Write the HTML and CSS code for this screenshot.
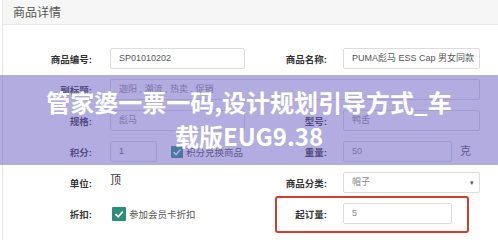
FILE: index.html
```html
<!DOCTYPE html>
<html lang="zh">
<head>
    <meta charset="UTF-8">
    <meta name="viewport" content="width=device-width, initial-scale=1.0">
    <title>商品详情</title>
    <link rel="stylesheet" href="styles.css">
</head>
<body>
    <div class="page">
        <div class="panel">
            <div class="panel-head">商品详情</div>
            <div class="panel-body">
                <div class="row">
                    <span class="label">商品编号:</span>
                    <div class="input">SP01010202</div>
                    <span class="label label-r">商品名称:</span>
                    <div class="input">PUMA彪马 ESS Cap 男女同款</div>
                </div>
                <div class="row">
                    <span class="label">副标题:</span>
                    <div class="input input-wide muted">迦阳 , 潮流 , 热卖 , 促销</div>
                </div>
                <div class="row">
                    <span class="label">规格:</span>
                    <div class="input muted">彪马</div>
                    <span class="label label-r">型号:</span>
                    <div class="input muted">鸭舌</div>
                </div>
                <div class="row">
                    <span class="label">积分:</span>
                    <div class="inline">
                        <div class="input input-xs">1</div>
                        <span class="check"><svg viewBox="0 0 14 14" width="12" height="12"><path d="M3 7.2 L6 10 L11 4.2" fill="none" stroke="#fff" stroke-width="1.8"/></svg></span>
                        <span class="check-text">积分兑换商品</span>
                    </div>
                    <span class="label label-r">重量:</span>
                    <div class="inline">
                        <div class="input input-s muted">50</div>
                        <span class="unit">克</span>
                    </div>
                </div>
                <div class="row">
                    <span class="label">单位:</span>
                    <span class="plain">顶</span>
                    <span class="label label-r">商品分类:</span>
                    <div class="input select muted">帽子<span class="caret">▾</span></div>
                </div>
                <div class="row row-mark">
                    <span class="label">折扣:</span>
                    <div class="inline">
                        <span class="check check-lg"><svg viewBox="0 0 14 14" width="14" height="14"><path d="M3.5 7.2 L6.2 9.8 L10.8 4.6" fill="none" stroke="#fff" stroke-width="1.6"/></svg></span>
                        <span class="check-text">参加会员卡折扣</span>
                    </div>
                    <span class="label label-r">起订量:</span>
                    <div class="input input-s muted">5</div>
                    <div class="mark"></div>
                </div>
            </div>
        </div>
        <div class="banner">管家婆一票一码,设计规划引导方式_车<br>载版EUG9.38</div>
    </div>
</body>
</html>
```

FILE: styles.css
```css
body {
    margin: 0;
    font-family: "Liberation Sans", "Noto Sans CJK SC", sans-serif;
    background: #fff;
    color: #333;
}
.page {
    position: relative;
    width: 498px;
    height: 240px;
    overflow: hidden;
}
.panel {
    margin-left: 2px;
    border-left: 1px solid #e6e6e6;
    height: 240px;
}
.panel-head {
    height: 24px;
    line-height: 26px;
    padding-left: 10px;
    font-size: 12px;
    color: #555;
    background: #f6f6f6;
    border-bottom: 1px solid #e7e7e7;
}
.panel-body {
    padding-top: 23px;
}
.row {
    position: relative;
    display: grid;
    grid-template-columns: 107px 135px 98px 137px;
    align-items: center;
    height: 21px;
    margin-bottom: 10px;
}
.label {
    padding-right: 18px;
    text-align: right;
    font-size: 9.5px;
    font-weight: bold;
    color: #333;
    white-space: nowrap;
}
.label-r {
    padding-right: 16px;
}
.input {
    box-sizing: border-box;
    height: 21px;
    line-height: 19px;
    padding-left: 8px;
    font-size: 9px;
    color: #555;
    background: #fff;
    border: 1px solid #dcdcdc;
    border-radius: 2px;
    white-space: nowrap;
    overflow: hidden;
}
.muted {
    color: #888;
}
.input-wide {
    grid-column: 2 / 5;
}
.input-xs {
    width: 47px;
}
.input-s {
    width: 109px;
}
.inline {
    display: flex;
    align-items: center;
    white-space: nowrap;
}
.check {
    display: flex;
    flex: none;
    align-items: center;
    justify-content: center;
    width: 12px;
    height: 12px;
    margin-left: 14px;
    background: #2a8f7a;
    border-radius: 1px;
}
.check-lg {
    width: 14px;
    height: 14px;
    margin-left: 2px;
}
.check-text {
    margin-left: 3px;
    font-size: 9.5px;
    color: #555;
}
.unit {
    margin-left: 8px;
    margin-top: -3px;
    font-size: 11px;
    color: #555;
}
.plain {
    align-self: start;
    margin-top: -1px;
    font-size: 11px;
    color: #333;
}
.select {
    position: relative;
}
.caret {
    position: absolute;
    right: 5px;
    top: 0;
    font-size: 7px;
    color: #555;
}
.mark {
    position: absolute;
    left: 272px;
    top: -7px;
    width: 194px;
    height: 37px;
    box-sizing: border-box;
    border: 2px solid #d63a30;
    border-radius: 3px;
}
.banner {
    position: absolute;
    left: 0;
    right: 0;
    top: 75px;
    height: 90px;
    box-sizing: border-box;
    padding-top: 10px;
    text-align: center;
    font-family: "Noto Sans CJK SC", sans-serif;
    font-size: 24px;
    font-weight: bold;
    line-height: 34px;
    color: #fff;
    background: rgba(110, 95, 195, 0.52);
}
```
